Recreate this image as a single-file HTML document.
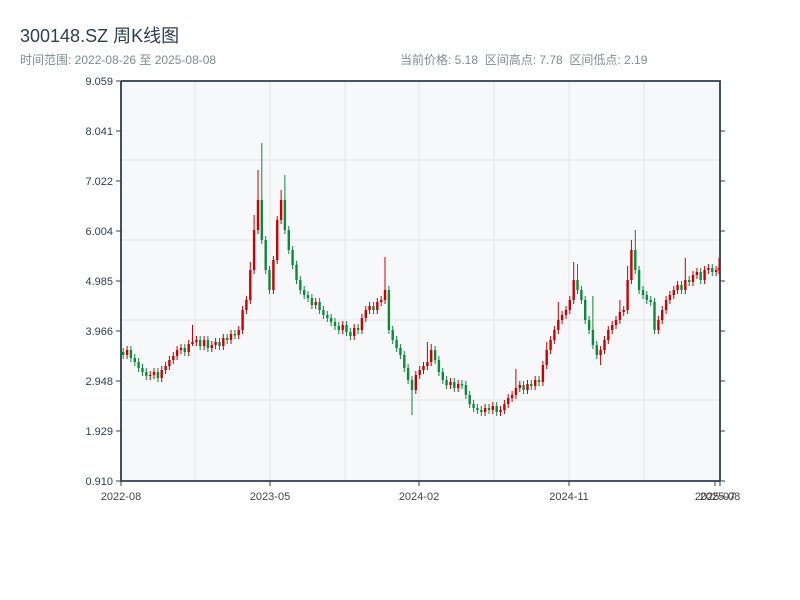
<!DOCTYPE html>
<html><head><meta charset="utf-8"><style>
body{margin:0;background:#fff;width:800px;height:600px;overflow:hidden;font-family:"Liberation Sans","Noto Sans CJK SC",sans-serif}
.t{position:absolute;left:20px;top:22px;font-size:18px;color:#2c3e50}
.s{position:absolute;top:51px;font-size:12px;color:#7f8c8d}
svg{position:absolute;left:0;top:0}
</style></head><body>
<div class="t">300148.SZ 周K线图</div>
<div class="s" style="left:20px">时间范围: 2022-08-26 至 2025-08-08</div>
<div class="s" style="left:400px">当前价格: 5.18&nbsp;&nbsp;区间高点: 7.78&nbsp;&nbsp;区间低点: 2.19</div>
<svg width="800" height="600" font-family="Liberation Sans, sans-serif" font-size="11" fill="#2c3e50">
<rect x="121" y="81" width="599" height="400" fill="#f7f8fa"/>
<path d="M195 81V481M270 81V481M345 81V481M419 81V481M494 81V481M569 81V481M644 81V481M121 160H720M121 240H720M121 320H720M121 400H720" stroke="#e2e5ea" fill="none"/>
<path d="M116 81H121M116 131H121M116 181H121M116 231H121M116 281H121M116 331H121M116 381H121M116 431H121M116 481H121M720 131H725M720 181H725M720 231H725M720 281H725M720 331H725M720 381H725M720 431H725M720 481H725M121 481V486M270 481V486M419 481V486M569 481V486M720 481V486M715 481V486" stroke="#2c3e50" fill="none"/>
<g text-anchor="end">
<text x="113" y="85">9.059</text><text x="113" y="135">8.041</text><text x="113" y="185">7.022</text><text x="113" y="235">6.004</text><text x="113" y="285">4.985</text><text x="113" y="335">3.966</text><text x="113" y="385">2.948</text><text x="113" y="435">1.929</text><text x="113" y="485">0.910</text>
</g>
<g text-anchor="middle" fill="#444">
<text x="121" y="500">2022-08</text><text x="270" y="500">2023-05</text><text x="419" y="500">2024-02</text><text x="569" y="500">2024-11</text><text x="715" y="500">2025-07</text><text x="720" y="500">2025-08</text>
</g>
<path d="M121 81H720V481M121 81V481H720" stroke="#2c3e50" stroke-width="1.8" fill="none"/>
<!-- red -->
<g stroke="#cc0000" fill="none">
<path stroke-width="1" d="M127.1 346V359M150.2 371V380M154 368V379M161.7 366V382M165.6 362V374M169.4 356V370M173.3 352V364M177.1 346V360M181 344V354M188.7 340V356M192.5 325V346M196.4 336V346M204.1 336V350M211.8 341V352M215.6 338V349M223.3 334V350M231 330V344M238.7 326V339M242.6 306V334M246.4 296V314M250.3 262V304M254.1 215V274M258 170V234M273.4 256V294M277.2 216V264M281.1 190V224M315.7 298V309M342.7 321V334M354.2 324V340M361.9 314V334M365.8 306V322M369.6 302V314M377.3 298V314M381.2 296V306M385 257V304M415.8 371V394M419.7 366V379M423.5 362V374M427.4 342V370M431.2 344V366M450.5 378V389M458.2 380V392M485.1 404V416M492.8 402V414M500.5 406V416M504.4 400V414M508.2 394V408M512.1 391V402M515.9 369V399M519.8 381V392M527.5 380V394M535.2 376V390M542.9 361V386M546.7 342V369M550.6 336V354M554.4 326V344M558.3 302V334M562.1 311V324M566 306V319M569.8 296V314M573.7 262V304M600.6 346V365M604.5 336V354M608.3 326V344M612.2 321V334M616 316V329M619.9 300V324M623.7 306V316M627.6 266V314M631.4 240V284M658.4 316V334M662.2 306V324M666.1 296V314M669.9 291V304M673.8 286V299M677.6 281V294M685.3 258V294M693 271V286M696.9 268V279M704.6 266V284M708.4 264V274M716.1 266V276M719 258V274"/>
<path stroke-width="2.4" d="M127.1 355V350M150.2 376V375M154 375V372M161.7 378V370M165.6 370V366M169.4 366V360M173.3 360V356M177.1 356V350M181 350V348M188.7 352V344M192.5 344V342M196.4 342V340M204.1 346V340M211.8 348V345M215.6 345V342M223.3 346V338M231 340V334M238.7 335V330M242.6 330V310M246.4 310V300M250.3 300V270M254.1 270V230M258 230V200M273.4 290V260M277.2 260V220M281.1 220V200M315.7 305V302M342.7 330V325M354.2 336V328M361.9 330V318M365.8 318V310M369.6 310V306M377.3 310V302M381.2 302V300M385 300V290M415.8 390V375M419.7 375V370M423.5 370V366M427.4 366V362M431.2 362V350M450.5 385V382M458.2 388V384M485.1 412V408M492.8 410V406M500.5 412V410M504.4 410V404M508.2 404V398M512.1 398V395M515.9 395V388M519.8 388V385M527.5 390V384M535.2 386V380M542.9 382V365M546.7 365V350M550.6 350V340M554.4 340V330M558.3 330V320M562.1 320V315M566 315V310M569.8 310V300M573.7 300V280M600.6 355V350M604.5 350V340M608.3 340V330M612.2 330V325M616 325V320M619.9 320V312M623.7 312V310M627.6 310V280M631.4 280V250M658.4 330V320M662.2 320V310M666.1 310V300M669.9 300V295M673.8 295V290M677.6 290V285M685.3 290V280M693 282V275M696.9 275V272M704.6 280V270M708.4 270V268M716.1 272V270M719 270V268"/>
</g>
<!-- green -->
<g stroke="#0a8a3a" fill="none">
<path stroke-width="1" d="M123.2 348V359M130.9 346V362M134.8 354V366M138.6 358V372M142.5 364V376M146.3 368V380M157.9 368V382M184.8 344V356M200.2 336V350M207.9 336V352M219.5 338V350M227.2 334V344M234.9 330V339M261.8 143V244M265.7 236V274M269.5 266V294M284.9 175V234M288.8 226V254M292.6 246V269M296.5 261V284M300.3 276V294M304.2 286V299M308 291V302M311.9 294V309M319.6 298V314M323.4 306V319M327.3 311V322M331.1 314V326M335 318V330M338.8 322V334M346.5 321V336M350.4 328V340M358.1 324V334M373.5 302V314M388.9 286V334M392.7 326V344M396.6 336V352M400.4 344V359M404.3 351V372M408.1 364V384M412 376V415M435.1 346V364M438.9 356V376M442.8 368V384M446.6 376V389M454.3 378V392M462 380V389M465.9 381V399M469.7 391V408M473.6 400V412M477.4 404V414M481.3 406V416M489 404V414M496.7 402V416M523.6 381V394M531.3 380V390M539 376V386M577.5 264V294M581.4 286V304M585.2 296V324M589.1 316V334M592.9 296V349M596.8 341V359M635.3 230V274M639.1 266V294M643 286V299M646.8 291V304M650.7 296V306M654.5 298V334M681.5 281V294M689.2 276V286M700.7 268V284M712.3 264V276"/>
<path stroke-width="2.4" d="M123.2 352V355M130.9 350V358M134.8 358V362M138.6 362V368M142.5 368V372M146.3 372V376M157.9 372V378M184.8 348V352M200.2 340V346M207.9 340V348M219.5 342V346M227.2 338V340M234.9 334V335.5M261.8 200V240M265.7 240V270M269.5 270V290M284.9 200V230M288.8 230V250M292.6 250V265M296.5 265V280M300.3 280V290M304.2 290V295M308 295V298M311.9 298V305M319.6 302V310M323.4 310V315M327.3 315V318M331.1 318V322M335 322V326M338.8 326V330M346.5 325V332M350.4 332V336M358.1 328V330M373.5 306V310M388.9 290V330M392.7 330V340M396.6 340V348M400.4 348V355M404.3 355V368M408.1 368V380M412 380V390M435.1 350V360M438.9 360V372M442.8 372V380M446.6 380V385M454.3 382V388M462 384V385.5M465.9 385V395M469.7 395V404M473.6 404V408M477.4 408V410M481.3 410V412M489 408V410M496.7 406V412M523.6 385V390M531.3 384V386M539 380V382M577.5 280V290M581.4 290V300M585.2 300V320M589.1 320V330M592.9 330V345M596.8 345V355M635.3 250V270M639.1 270V290M643 290V295M646.8 295V300M650.7 300V302M654.5 302V330M681.5 285V290M689.2 280V282M700.7 272V280M712.3 268V272"/>
</g>
</svg>
</body></html>
